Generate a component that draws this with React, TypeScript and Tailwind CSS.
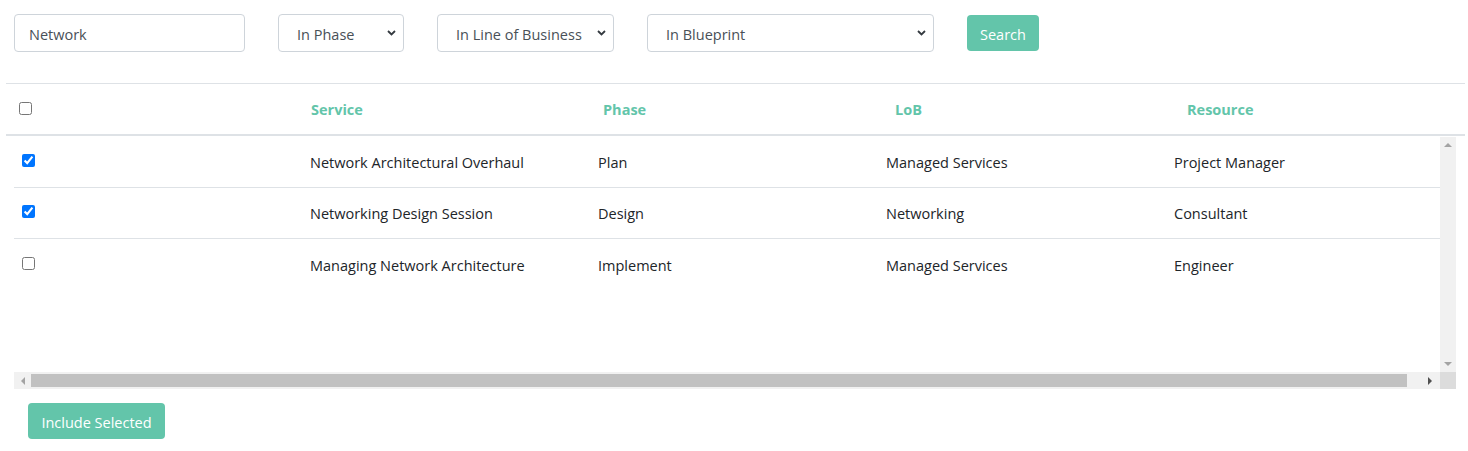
import { useState } from 'react';

const font = { fontFamily: '"Open Sans", "Noto Sans", sans-serif' };

const rows = [
  { id: 1, service: 'Network Architectural Overhaul', phase: 'Plan', lob: 'Managed Services', resource: 'Project Manager', checked: true },
  { id: 2, service: 'Networking Design Session', phase: 'Design', lob: 'Networking', resource: 'Consultant', checked: true },
  { id: 3, service: 'Managing Network Architecture', phase: 'Implement', lob: 'Managed Services', resource: 'Engineer', checked: false },
];

function Chevron() {
  return (
    <svg width="9" height="6" viewBox="0 0 9 6" className="absolute right-[8px] top-1/2 -translate-y-1/2 pointer-events-none">
      <path d="M1 1l3.5 3.5L8 1" fill="none" stroke="#343a40" strokeWidth="1.8" />
    </svg>
  );
}

function Select({ label, width }: { label: string; width: string }) {
  return (
    <div className={`relative h-[38px] ${width}`}>
      <div className="h-full w-full rounded-[4px] border border-[#ced4da] bg-white pl-[18px] pt-[3px] flex items-center text-[14.5px] text-[#495057]">
        {label}
      </div>
      <Chevron />
    </div>
  );
}

export default function App() {
  const [checked, setChecked] = useState(rows.map((r) => r.checked));

  return (
    <div className="w-[1468px] h-[451px] bg-white text-[#212529] overflow-hidden" style={font}>
      <div className="flex items-center pt-[14px] pl-[14px] gap-[33px]">
        <input
          defaultValue="Network"
          className="h-[38px] w-[231px] rounded-[4px] border border-[#ced4da] px-[14px] pt-[3px] text-[14.5px] text-[#495057] outline-none"
        />
        <Select label="In Phase" width="w-[126px]" />
        <Select label="In Line of Business" width="w-[177px]" />
        <Select label="In Blueprint" width="w-[287px]" />
        <button className="h-[36px] w-[72px] rounded-[4px] bg-[#63c5aa] pt-[3px] text-[14.5px] text-white">Search</button>
      </div>

      <div className="mt-[31px] ml-[6px] w-[1459px]">
        <div className="grid grid-cols-[293px_292px_292px_292px_1fr] h-[53px] border-t border-[#dee2e6] border-b-2 items-center text-[14.5px] font-bold text-[#63c5aa]">
          <div className="pl-[13px] pb-[2px] flex items-center">
            <input type="checkbox" className="w-[13px] h-[13px] m-0" />
          </div>
          <div className="pl-3 pt-[2px]">Service</div>
          <div className="pl-3 pt-[2px]">Phase</div>
          <div className="pl-3 pt-[2px]">LoB</div>
          <div className="pl-3 pt-[2px]">Resource</div>
        </div>
      </div>

      <div className="ml-[14px] mt-px w-[1442px] h-[252px] flex flex-col">
        <div className="flex h-[235px]">
          <div className="w-[1426px] text-[14.5px]">
            {rows.map((r, i) => (
              <div
                key={r.id}
                className={`grid grid-cols-[284px_288px_288px_288px_1fr] h-[51px] items-center ${i < rows.length - 1 ? 'border-b border-[#dee2e6]' : ''}`}
              >
                <div className="pl-2 pb-[3px] flex items-center">
                  <input
                    type="checkbox"
                    checked={checked[i]}
                    onChange={() => setChecked(checked.map((c, j) => (j === i ? !c : c)))}
                    className="w-[13px] h-[13px] m-0"
                  />
                </div>
                <div className="pl-3 pt-[2px]">{r.service}</div>
                <div className="pl-3 pt-[2px]">{r.phase}</div>
                <div className="pl-3 pt-[2px]">{r.lob}</div>
                <div className="pl-3 pt-[2px]">{r.resource}</div>
              </div>
            ))}
          </div>
          <div className="w-[16px] bg-[#f1f1f1] flex flex-col justify-between items-center py-[6px]">
            <svg width="8" height="4" viewBox="0 0 8 4"><path d="M0 4L4 0l4 4z" fill="#a3a3a3" /></svg>
            <svg width="8" height="4" viewBox="0 0 8 4"><path d="M0 0h8L4 4z" fill="#a3a3a3" /></svg>
          </div>
        </div>
        <div className="flex h-[17px]">
          <div className="w-[1426px] bg-[#f1f1f1] flex items-center">
            <div className="w-[17px] flex justify-center">
              <svg width="4" height="8" viewBox="0 0 4 8"><path d="M4 0v8L0 4z" fill="#a3a3a3" /></svg>
            </div>
            <div className="h-[13px] w-[1376px] bg-[#c1c1c1]" />
            <div className="flex-1 flex justify-end pr-[8px]">
              <svg width="4" height="8" viewBox="0 0 4 8"><path d="M0 0l4 4-4 4z" fill="#505050" /></svg>
            </div>
          </div>
          <div className="w-[16px] bg-[#dcdcdc]" />
        </div>
      </div>

      <button className="mt-[14px] ml-[28px] h-[36px] w-[137px] rounded-[4px] bg-[#63c5aa] pt-[3px] text-[14.5px] text-white">
        Include Selected
      </button>
    </div>
  );
}
